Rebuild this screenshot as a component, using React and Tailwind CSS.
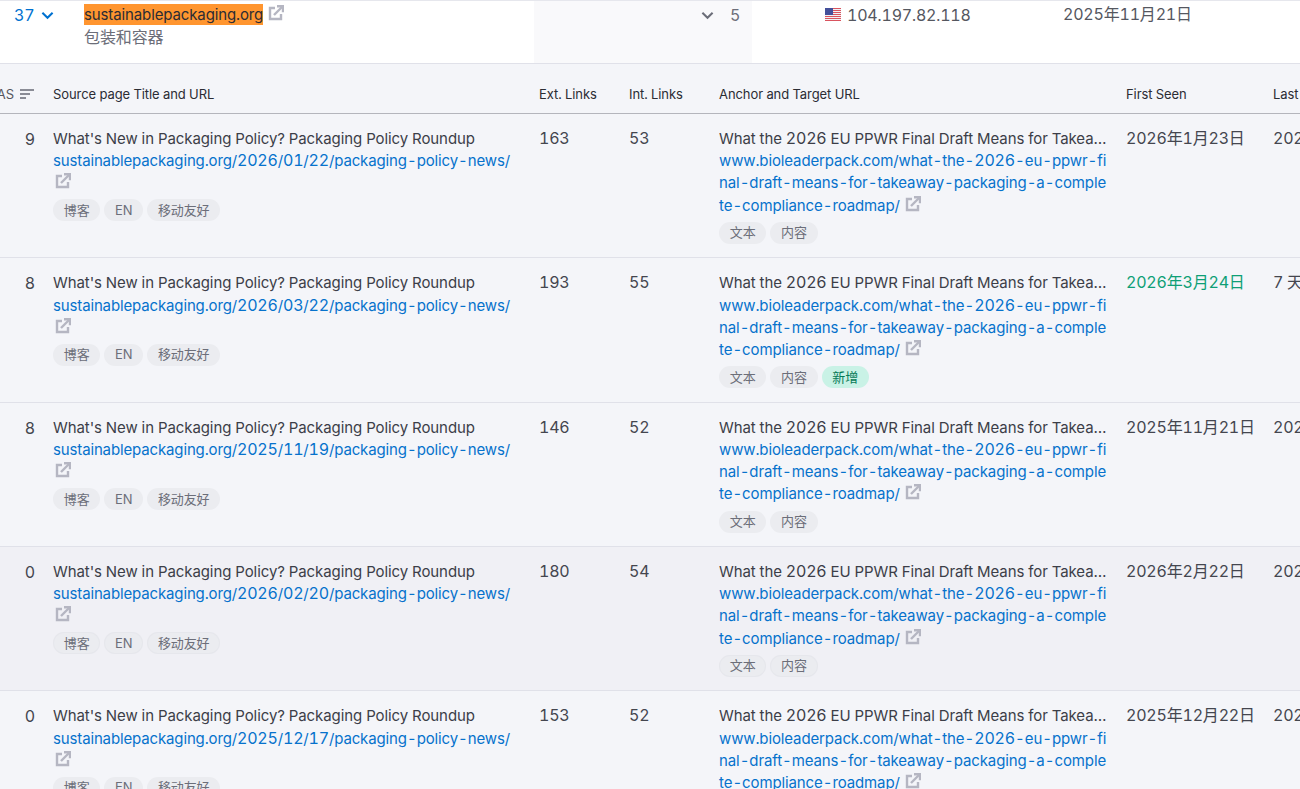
import React from "react";

const ExtIcon = ({ className = "" }) => (
  <svg viewBox="0 0 16 16" width="16" height="16" fill="none" stroke="#b5b6c2" strokeWidth="2.400" className={"inline-block align-[-1px] " + className}>
    <path d="M7 3H2v11.000h11V9" />
    <path d="M6 10 14 2" />
    <path d="M9 1.200h6v6" />
  </svg>
);

const Chevron = ({ color }) => (
  <svg viewBox="0 0 14 9" width="13" height="9" fill="none" stroke={color} strokeWidth="2.2">
    <path d="M1.500 1.500 7 7l5.500-5.500" />
  </svg>
);

const Flag = () => (
  <svg viewBox="0 0 16 13" width="16" height="13">
    <rect width="16" height="13" fill="#f1f1f4" />
    {[0, 2, 4, 6, 8, 10, 12].map((y) => (
      <rect key={y} y={y} width="16" height="1" fill="#d9535e" />
    ))}
    <rect width="8" height="7" fill="#44509a" />
  </svg>
);

const Chip = ({ children, green, edge }) => (
  <span className={"inline-flex items-center h-[22px] px-[10.750px] rounded-full text-[13px] leading-none " + (green ? "bg-[#c9f2e6] text-[#067a57]" : "bg-[#ebecf0] text-[#6c6e79]") + (edge ? " ring-1 ring-inset ring-[#e6e7ec]" : "")}>
    {children}
  </span>
);

// Digits and CJK in the reference are a size larger, and hyphens sit on a wider advance.
const T = ({ text }) =>
  text.split(/([\d年月日天]+|-)/).map((p, i) => {
    if (p === "-") return <span key={i} className="mx-[0.100px]">-</span>;
    if (/^[\d年月日天]+$/.test(p)) return <span key={i} className="text-[16px] leading-none tracking-[-0.2px]">{p}</span>;
    return <React.Fragment key={i}>{p}</React.Fragment>;
  });

const rows = [
  { as: 9, url: "sustainablepackaging.org/2026/01/22/packaging-policy-news/", ext: 163, int: 53, first: "2026年1月23日", last: "202", bg: "bg-[#f4f5f9]" },
  { as: 8, url: "sustainablepackaging.org/2026/03/22/packaging-policy-news/", ext: 193, int: 55, first: "2026年3月24日", last: "7 天", isNew: true, bg: "bg-[#f4f5f9]" },
  { as: 8, url: "sustainablepackaging.org/2025/11/19/packaging-policy-news/", ext: 146, int: 52, first: "2025年11月21日", last: "202", bg: "bg-[#f4f5f9]" },
  { as: 0, url: "sustainablepackaging.org/2026/02/20/packaging-policy-news/", ext: 180, int: 54, first: "2026年2月22日", last: "202", bg: "bg-[#f0f0f5]", hover: true },
  { as: 0, url: "sustainablepackaging.org/2025/12/17/packaging-policy-news/", ext: 153, int: 52, first: "2025年12月22日", last: "202", bg: "bg-[#f4f5f9]" },
];

const cols = "grid grid-cols-[73px_486px_90px_90px_407px_147px_200px] w-[1393px] -ml-[20px]";
const anchorLines = ["www.bioleaderpack.com/what-the-2026-eu-ppwr-fi", "nal-draft-means-for-takeaway-packaging-a-comple", "te-compliance-roadmap/"];

export default function App() {
  return (
    <div className="w-[1300px] h-[789px] overflow-hidden bg-[#f4f5f9] text-[15px] leading-[22.2px] tracking-[-0.12px] tabular-nums text-[#3c3e48] font-['Inter','Noto_Sans_CJK_SC',sans-serif]">
      <div className="flex h-[64px] bg-white border-t border-t-[#e6e7ed] border-b border-b-[#e0e1e9]">
        <div className="w-[84px] shrink-0 pt-[3px] pl-[14px] flex items-start gap-[6px]">
          <span className="text-[#0071d0] text-[16px] leading-[22px]">37</span>
          <span className="pt-[7px]"><Chevron color="#0071d0" /></span>
        </div>
        <div className="w-[450px] shrink-0 pt-[3px]">
          <div className="leading-[22px]">
            <span className="bg-[#ff952f] text-[#2b2c34] py-[1px]">sustainablepackaging.org</span>
            <ExtIcon className="ml-[5px]" />
          </div>
          <div className="leading-[22px] text-[16px] text-[#6c6e79]">包装和容器</div>
        </div>
        <div className="w-[218px] shrink-0 bg-[#f9f9fb] flex items-start pl-[167px] pt-[3px] gap-[16px] text-[#6c6e79]">
          <span className="pt-[7px]"><Chevron color="#6c6e79" /></span>
          <span className="text-[16px] leading-[22px]">5</span>
        </div>
        <div className="w-[73px] shrink-0" />
        <div className="w-[238px] shrink-0 pt-[3px] flex items-start gap-[6px] leading-[22px] text-[#55575f]">
          <span className="pt-[4px]"><Flag /></span>
          <span className="pt-[1px]"><T text="104.197.82.118" /></span>
        </div>
        <div className="pt-[3px] leading-[22px] text-[#55575f]"><T text="2025年11月21日" /></div>
      </div>

      <div className={cols + " h-[50px] pt-[12px] items-center text-[13px] tracking-[-0.08px] text-[#2b2c34] border-b border-[#b4b5bc]"}>
        <div className="flex items-center justify-end gap-[6px] pr-[19px]">
          <span className="text-[#55575f]">AS</span>
          <svg viewBox="0 0 14 12" width="14" height="12" fill="none" stroke="#8a8c96" strokeWidth="2">
            <path d="M0 2h14M0 6h10M0 10h6" />
          </svg>
        </div>
        <div>Source page Title and URL</div>
        <div>Ext. Links</div>
        <div>Int. Links</div>
        <div>Anchor and Target URL</div>
        <div>First Seen</div>
        <div>Last</div>
      </div>

      {rows.map((r, i) => (
        <div key={i} className={cols + " " + r.bg + " h-[144.350px] pt-[14px] border-b border-[#e0e1e9]"}>
          <div className="text-right pr-[18px] text-[#44464f] text-[16px]">{r.as}</div>
          <div className="pr-[18px]">
            <div className="truncate tracking-[-0.08px]">What's New in Packaging Policy? Packaging Policy Roundup</div>
            <div className="text-[#0672cc] whitespace-nowrap tracking-[-0.14px]"><T text={r.url} /></div>
            <div className="h-[22px]"><ExtIcon className="ml-[2px]" /></div>
            <div className="flex gap-[4px] mt-[5px]">
              <Chip edge={r.hover}>博客</Chip>
              <Chip edge={r.hover}>EN</Chip>
              <Chip edge={r.hover}>移动友好</Chip>
            </div>
          </div>
          <div className="text-[#44464f]"><T text={String(r.ext)} /></div>
          <div className="text-[#44464f]"><T text={String(r.int)} /></div>
          <div className="pr-[18px] min-w-0">
            <div className="truncate tracking-[-0.08px]"><T text="What the 2026 EU PPWR Final Draft Means for Takeaway Packaging: A Complete Compliance Roadmap" /></div>
            {anchorLines.map((l, j) => (
              <div key={j} className="text-[#0672cc] whitespace-nowrap">
                <T text={l} />
                {j === 2 && <ExtIcon className="ml-[5px]" />}
              </div>
            ))}
            <div className="flex gap-[4px] mt-[5px]">
              <Chip edge={r.hover}>文本</Chip>
              <Chip edge={r.hover}>内容</Chip>
              {r.isNew && <Chip green>新增</Chip>}
            </div>
          </div>
          <div className={r.isNew ? "text-[#0e9f76]" : "text-[#44464f]"}><T text={r.first} /></div>
          <div className="text-[#44464f] whitespace-nowrap"><T text={r.last} /></div>
        </div>
      ))}
    </div>
  );
}
